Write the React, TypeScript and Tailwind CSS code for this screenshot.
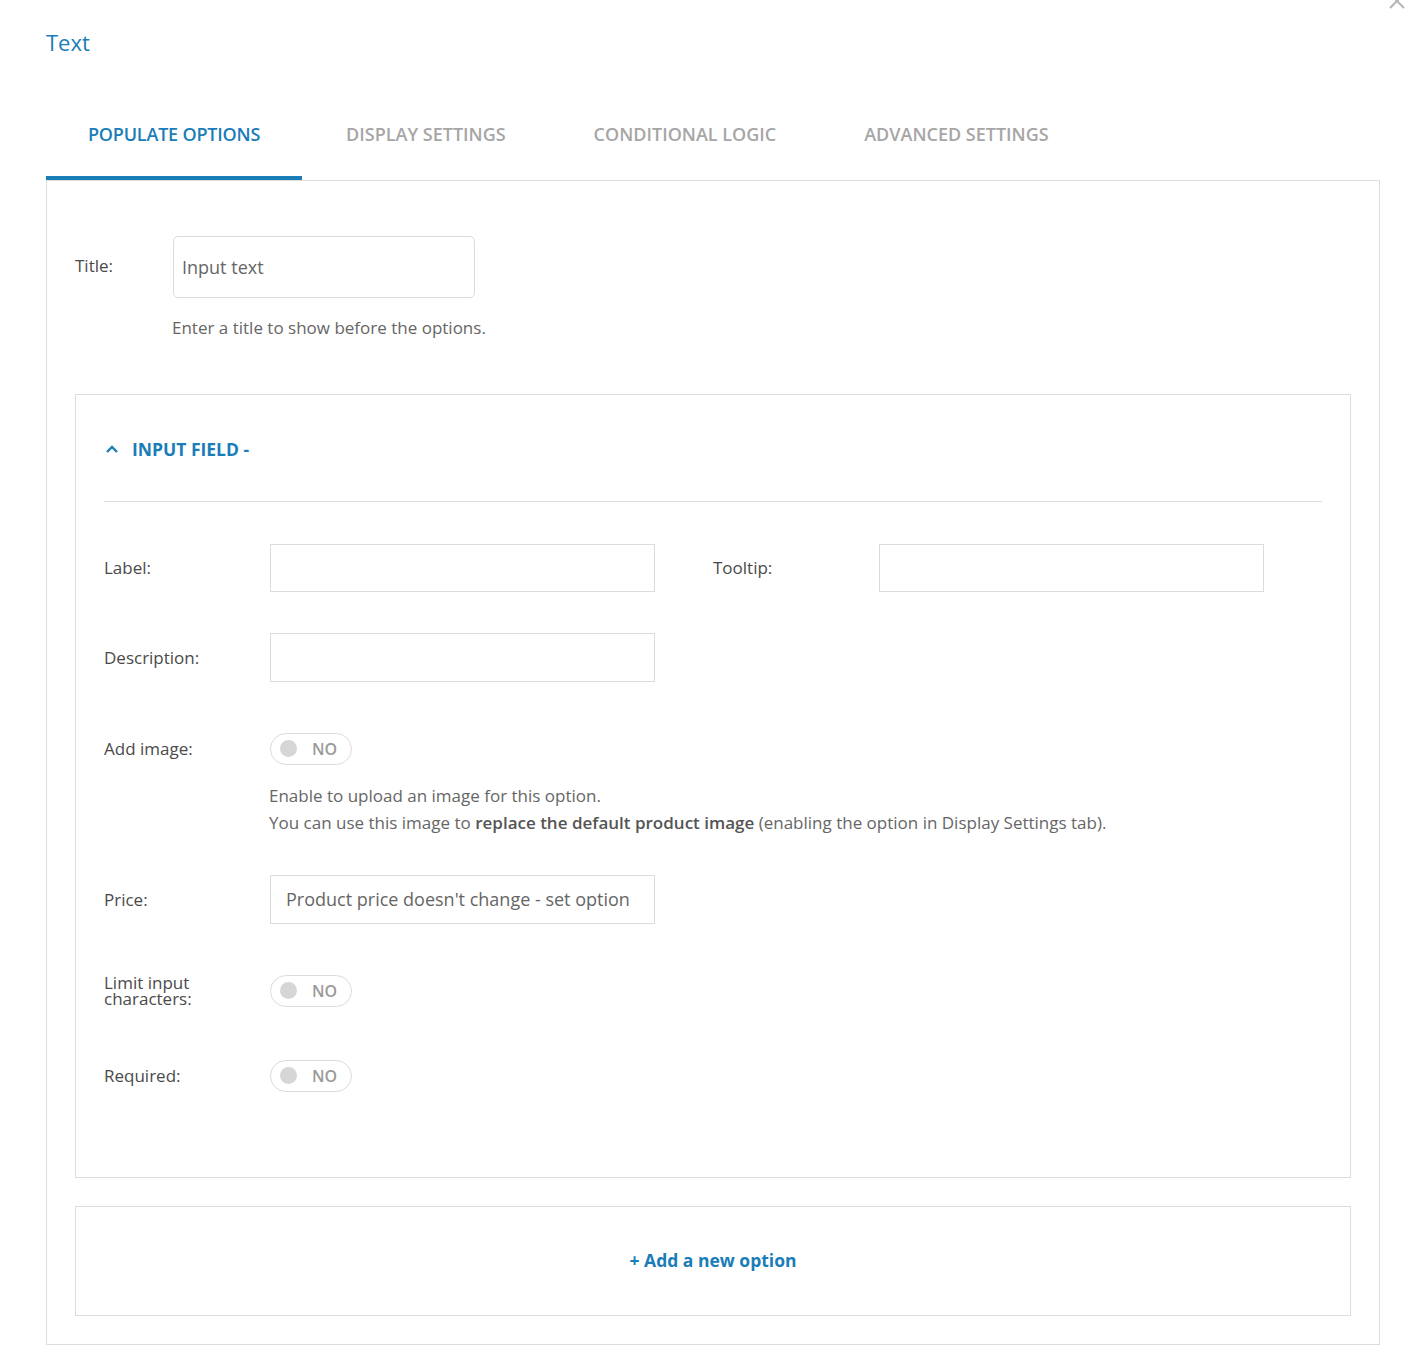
import React from 'react'

const TABS = ['POPULATE OPTIONS', 'DISPLAY SETTINGS', 'CONDITIONAL LOGIC', 'ADVANCED SETTINGS']

function Toggle() {
  return (
    <div className="flex h-[32px] w-[82px] items-center rounded-full border border-[#dcdcdc] bg-white pl-[9px]">
      <span className="h-[17px] w-[17px] rounded-full bg-[#d6d6d6]" />
      <span className="ml-[15px] text-[16px] font-semibold text-[#9a9a9a]">NO</span>
    </div>
  )
}

function Row({ label, children, className = '' }: { label: React.ReactNode; children: React.ReactNode; className?: string }) {
  return (
    <div className={`flex items-center ${className}`}>
      <div className="w-[166px] shrink-0 text-[17px] leading-[17px] text-[#4a4a4a]">{label}</div>
      {children}
    </div>
  )
}

export default function App() {
  return (
    <div className="relative min-h-[1353px] w-[1422px] bg-white font-['Open_Sans',sans-serif]">
      {/* close icon, cut off at top */}
      <svg className="absolute right-[16px] top-[-8px]" width="18" height="18" viewBox="0 0 18 18">
        <path d="M2 2 L16 16 M16 2 L2 16" stroke="#b5b5b5" strokeWidth="2" />
      </svg>

      <div className="px-[46px] pt-[28px]">
        <h1 className="text-[22px] leading-[28px] text-[#1a7db7]">Text</h1>

        {/* Tabs */}
        <div className="mt-[46px] flex w-[1334px]">
          {TABS.map((t, i) => (
            <div
              key={t}
              className={`pb-[30px] pt-[20px] text-[18px] font-semibold leading-[24px] ${
                i === 0
                  ? 'border-b-4 border-[#1a7db7] px-[42px] tracking-[-0.2px] text-[#1a7db7]'
                  : 'px-[44px] text-[#a6a6a6]'
              }`}
            >
              {t}
            </div>
          ))}
        </div>

        {/* Panel */}
        <div className="w-[1334px] border border-[#dddddd] px-[28px] pb-[28px] pt-[55px]">
          <div className="flex items-start">
            <div className="mt-[17px] w-[98px] text-[17px] text-[#4a4a4a]">Title:</div>
            <div className="flex h-[62px] w-[302px] items-center rounded-[5px] border border-[#dcdcdc] px-[8px] text-[18px] text-[#666]">
              Input text
            </div>
          </div>
          <p className="ml-[97px] mt-[17px] text-[17px] text-[#666]">Enter a title to show before the options.</p>

          {/* Input field box */}
          <div className="mt-[53px] border border-[#dddddd] px-[28px] pb-[85px] pt-[40px]">
            <div className="flex items-center text-[#1a7db7]">
              <svg width="14" height="10" viewBox="0 0 14 10" className="ml-[1px]">
                <path d="M2 8 L7 3 L12 8" fill="none" stroke="#1a7db7" strokeWidth="2.4" />
              </svg>
              <span className="ml-[13px] text-[17.5px] font-bold leading-[28px]">INPUT FIELD -</span>
            </div>
            <div className="mt-[38px] h-px bg-[#dddddd]" />

            <div className="mt-[42px] flex">
              <Row label="Label:">
                <div className="h-[48px] w-[385px] border border-[#dcdcdc]" />
              </Row>
              <Row label="Tooltip:" className="ml-[58px]">
                <div className="h-[48px] w-[385px] border border-[#dcdcdc]" />
              </Row>
            </div>

            <Row label="Description:" className="mt-[41px]">
              <div className="h-[49px] w-[385px] border border-[#dcdcdc]" />
            </Row>

            <Row label="Add image:" className="mt-[51px]">
              <Toggle />
            </Row>
            <div className="ml-[165px] mt-[17px] text-[17px] leading-[27px] text-[#666]">
              <p>Enable to upload an image for this option.</p>
              <p>
                You can use this image to <b className="font-semibold text-[#555]">replace the default product image</b> (enabling the option in Display Settings tab).
              </p>
            </div>

            <Row label="Price:" className="mt-[39px]">
              <div className="flex h-[49px] w-[385px] items-center whitespace-nowrap border border-[#dcdcdc] px-[15px] text-[18px] text-[#666]">
                Product price doesn't change - set option
              </div>
            </Row>

            <Row
              label={
                <span className="block leading-[16px]">
                  Limit input
                  <br />
                  characters:
                </span>
              }
              className="mt-[51px]"
            >
              <Toggle />
            </Row>

            <Row label="Required:" className="mt-[53px]">
              <Toggle />
            </Row>
          </div>

          {/* Add option */}
          <div className="mt-[28px] flex h-[110px] items-center justify-center border border-[#dddddd]">
            <span className="text-[17.5px] font-bold text-[#1a7db7]">+ Add a new option</span>
          </div>
        </div>
      </div>
    </div>
  )
}
